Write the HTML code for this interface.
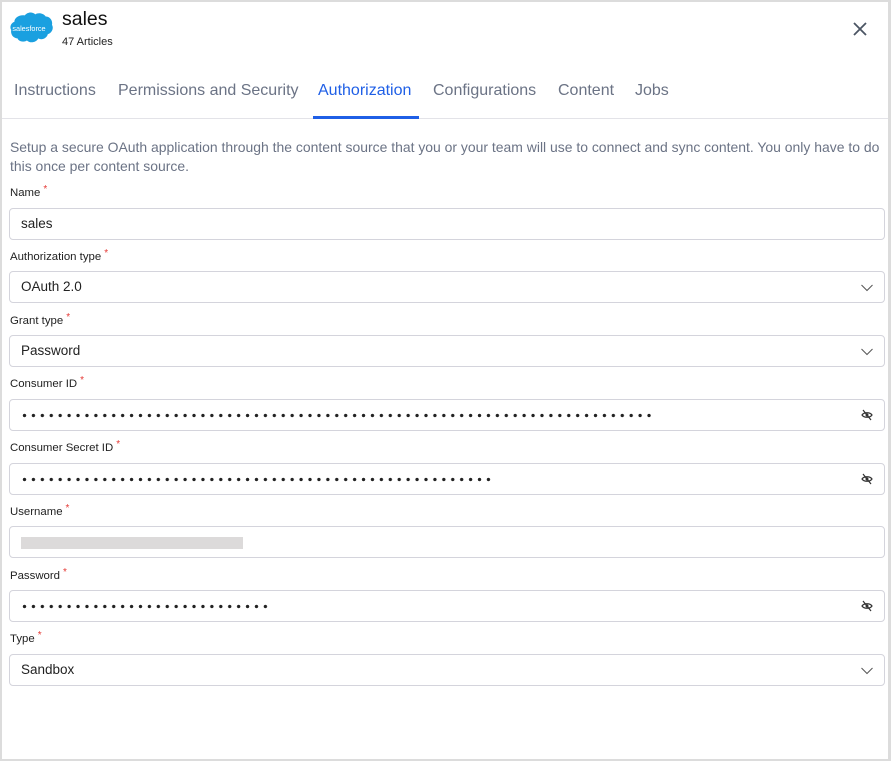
<!DOCTYPE html>
<html><head><style>
*{box-sizing:border-box;margin:0;padding:0}
body{width:891px;height:761px;background:#fff;font-family:"Liberation Sans",sans-serif;position:relative;overflow:hidden}
.frame{position:absolute;left:0;top:0;width:891px;height:761px;border:2px solid #dcdcdc;border-right-width:3px}
.abs{position:absolute}
.logo{left:5px;top:9px}
.title{left:62px;top:8px;font-size:19.5px;color:#111}
.sub{left:62px;top:36px;font-size:11px;color:#222}
.close{left:851px;top:20px}
.tabs{left:14px;top:82px;font-size:16px;color:#6b7385;white-space:nowrap}
.tabs span{position:absolute;top:0}
.sep{left:2px;top:118px;width:886px;height:1px;background:#e3e3e8}
.ul{left:313px;top:116px;width:106px;height:3px;background:#1f5fe6}
.desc{left:10px;top:138px;width:878px;font-size:13.95px;line-height:19px;color:#6b7385}
.lbl{left:10px;font-size:11.4px;color:#222}
.lbl b{color:#e53935;font-weight:normal;font-size:10px;position:relative;top:-4px;margin-left:3px}
.inp{left:9px;width:876px;height:32px;border:1px solid #d4d4dc;border-radius:4px;font-size:13.5px;color:#222;padding-left:11px;line-height:30px}
.dots{position:absolute;left:12px;top:13px;height:5px;background:radial-gradient(circle at 2.5px 2.5px,#222 1.5px,transparent 1.9px) 0 0/8.93px 5px repeat-x}
.chev{position:absolute;right:10px;top:11px}
.eye{position:absolute;right:11px;top:9px}
</style></head><body>
<div class="frame"></div>
<svg class="abs logo" width="48" height="40" viewBox="0 0 46 34"><path d="M19 4c2-3 7-4 10-1 3-2 8-1 10 2 4 0 7 4 6 8 2 3 0 8-4 9-1 4-6 6-9 4-2 4-8 5-11 2-3 2-8 1-9-2-4 0-7-4-6-8-2-3 0-7 3-8 0-4 5-7 10-6z" fill="#1aa0e0"/><text x="23" y="19" font-size="7" fill="#fff" text-anchor="middle" font-family="Liberation Sans">salesforce</text></svg>
<div class="abs title">sales</div>
<div class="abs sub">47 Articles</div>
<svg class="abs close" width="18" height="18" viewBox="0 0 18 18"><path d="M3 3L15 15M15 3L3 15" stroke="#4b5563" stroke-width="1.8"/></svg>
<div class="abs tabs" style="width:700px;height:20px">
<span style="left:0">Instructions</span>
<span style="left:104px">Permissions and Security</span>
<span style="left:304px;color:#1f5fe6">Authorization</span>
<span style="left:419px">Configurations</span>
<span style="left:544px">Content</span>
<span style="left:621px">Jobs</span>
</div>
<div class="abs sep"></div>
<div class="abs ul"></div>
<div class="abs desc">Setup a secure OAuth application through the content source that you or your team will use to connect and sync content. You only have to do this once per content source.</div>

<div class="abs lbl" style="top:187px">Name<b>*</b></div>
<div class="abs inp" style="top:208px">sales</div>

<div class="abs lbl" style="top:251px">Authorization type<b>*</b></div>
<div class="abs inp" style="top:271px">OAuth 2.0<svg class="chev" width="14" height="9" viewBox="0 0 14 9"><path d="M1.5 2l5.5 5.5 5.5-5.5" fill="none" stroke="#555" stroke-width="1"/></svg></div>

<div class="abs lbl" style="top:315px">Grant type<b>*</b></div>
<div class="abs inp" style="top:335px">Password<svg class="chev" width="14" height="9" viewBox="0 0 14 9"><path d="M1.5 2l5.5 5.5 5.5-5.5" fill="none" stroke="#555" stroke-width="1"/></svg></div>

<div class="abs lbl" style="top:378px">Consumer ID<b>*</b></div>
<div class="abs inp" style="top:399px"><div class="dots" style="width:631px"></div><svg class="eye" width="12" height="12" viewBox="0 0 12 12"><path d="M1 6c2-3 8-3 10 0-2 3-8 3-10 0z" fill="none" stroke="#333" stroke-width="1.2"/><circle cx="6" cy="6" r="1.5" fill="#333"/><path d="M2 1l8 10" stroke="#333" stroke-width="1.2"/></svg></div>

<div class="abs lbl" style="top:442px">Consumer Secret ID<b>*</b></div>
<div class="abs inp" style="top:463px"><div class="dots" style="width:470px"></div><svg class="eye" width="12" height="12" viewBox="0 0 12 12"><path d="M1 6c2-3 8-3 10 0-2 3-8 3-10 0z" fill="none" stroke="#333" stroke-width="1.2"/><circle cx="6" cy="6" r="1.5" fill="#333"/><path d="M2 1l8 10" stroke="#333" stroke-width="1.2"/></svg></div>

<div class="abs lbl" style="top:506px">Username<b>*</b></div>
<div class="abs inp" style="top:526px"><div style="position:absolute;left:11px;top:10px;width:222px;height:12px;background:#dcdada"></div></div>

<div class="abs lbl" style="top:570px">Password<b>*</b></div>
<div class="abs inp" style="top:590px"><div class="dots" style="width:247px"></div><svg class="eye" width="12" height="12" viewBox="0 0 12 12"><path d="M1 6c2-3 8-3 10 0-2 3-8 3-10 0z" fill="none" stroke="#333" stroke-width="1.2"/><circle cx="6" cy="6" r="1.5" fill="#333"/><path d="M2 1l8 10" stroke="#333" stroke-width="1.2"/></svg></div>

<div class="abs lbl" style="top:633px">Type<b>*</b></div>
<div class="abs inp" style="top:654px">Sandbox<svg class="chev" width="14" height="9" viewBox="0 0 14 9"><path d="M1.5 2l5.5 5.5 5.5-5.5" fill="none" stroke="#555" stroke-width="1"/></svg></div>
</body></html>
